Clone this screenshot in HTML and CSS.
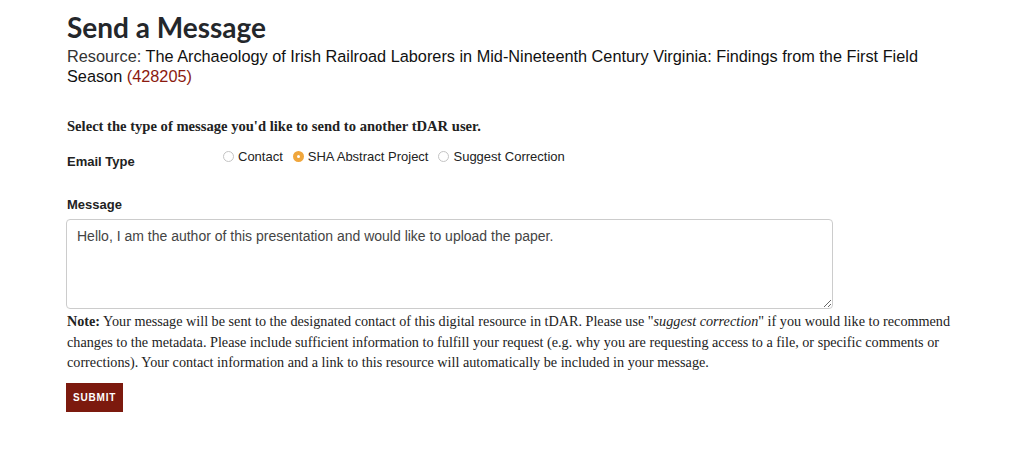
FILE: index.html
```html
<!DOCTYPE html>
<html lang="en">
<head>
    <meta http-equiv="Content-Type" content="text/html; charset=UTF-8">
    <meta name="viewport" content="width=device-width, initial-scale=1">

    <title>Send a Message</title>

    <link rel="stylesheet" href="styles.css">
</head>
    <body>
        <main class="page">
            <h1>Send a Message</h1>
            <p class="resource"><span class="resource__label">Resource:</span> The Archaeology of Irish Railroad Laborers in Mid-Nineteenth Century Virginia: Findings from the First Field Season <span class="resource__id">(428205)</span></p>

            <form id="message_form" method="post" action="#">
                <p class="intro">Select the type of message you'd like to send to another tDAR user.</p>

                <div class="row row--type">
                    <span class="field-label">Email Type</span>
                    <div class="choices">
                        <label class="choice"><input type="radio" name="type" value="contact" /> Contact</label>
                        <label class="choice"><input type="radio" name="type" value="sha" checked /> SHA Abstract Project</label>
                        <label class="choice"><input type="radio" name="type" value="correction" /> Suggest Correction</label>
                    </div>
                </div>

                <div class="row row--message">
                    <label class="field-label" for="message">Message</label>
                    <textarea id="message" name="message">Hello, I am the author of this presentation and would like to upload the paper.</textarea>
                </div>

                <p class="note"><b>Note:</b> Your message will be sent to the designated contact of this digital resource in tDAR. Please use "<i>suggest correction</i>" if you would like to recommend changes to the metadata. Please include sufficient information to fulfill your request (e.g. why you are requesting access to a file, or specific comments or corrections). Your contact information and a link to this resource will automatically be included in your message.</p>

                <button type="submit">Submit</button>
            </form>
        </main>
    </body>
</html>
```

FILE: styles.css
```css
body {
    margin: 0;
    background: #fff;
    color: #222;
    font-family: "Liberation Sans", Arial, sans-serif;
}

.page {
    width: 897px;
    padding: 10px 0 0 67px;
}

h1 {
    font-family: Lato, "Helvetica Neue", Arial, sans-serif;
    font-size: 28px;
    font-weight: 700;
    line-height: 34px;
    color: #24272b;
    margin: 0 0 2px;
}

.resource {
    font-size: 16.3px;
    line-height: 20px;
    color: #111;
    margin: 0 0 30px;
}

.resource__label {
    color: #333;
}

.resource__id {
    color: #8b1a10;
}

.intro {
    font-family: "Liberation Serif", serif;
    font-size: 14.6px;
    font-weight: 700;
    line-height: 20px;
    margin: 0 0 13px;
}

.row--type {
    display: flex;
    align-items: flex-start;
}

.field-label {
    display: block;
    font-size: 13px;
    font-weight: 700;
    color: #222;
}

.row--type .field-label {
    width: 156px;
    padding-top: 5px;
}

.choices {
    display: flex;
    gap: 10px;
    font-size: 13px;
    color: #222;
}

.choice {
    display: flex;
    align-items: center;
    gap: 4px;
}

/* custom radio so the checked one matches the orange dot */
.choice input {
    appearance: none;
    -webkit-appearance: none;
    box-sizing: border-box;
    margin: 0;
    width: 11px;
    height: 11px;
    border: 1px solid #c4c4c4;
    border-radius: 50%;
    background: #fff;
}

.choice input:checked {
    border: 4px solid #f0a63c;
    background: #fff;
}

.row--message {
    margin-top: 28px;
}

.row--message .field-label {
    margin-bottom: 7px;
}

textarea {
    display: block;
    box-sizing: border-box;
    width: 767px;
    height: 90px;
    margin-left: -1px;
    padding: 7px 10px;
    border: 1px solid #ccc;
    border-radius: 4px;
    font-family: "Liberation Sans", Arial, sans-serif;
    font-size: 14px;
    line-height: 18px;
    color: #444;
    resize: vertical;
}

.note {
    font-family: "Liberation Serif", serif;
    font-size: 14.2px;
    line-height: 20.5px;
    color: #222;
    margin: 2px 0 10px;
}

button {
    background: #7c1a0e;
    color: #fff;
    border: none;
    border-radius: 0;
    margin-left: -1px;
    padding: 9px 7px;
    font-family: "Liberation Sans", Arial, sans-serif;
    font-size: 10px;
    font-weight: 700;
    letter-spacing: 0.8px;
    text-transform: uppercase;
}
```
